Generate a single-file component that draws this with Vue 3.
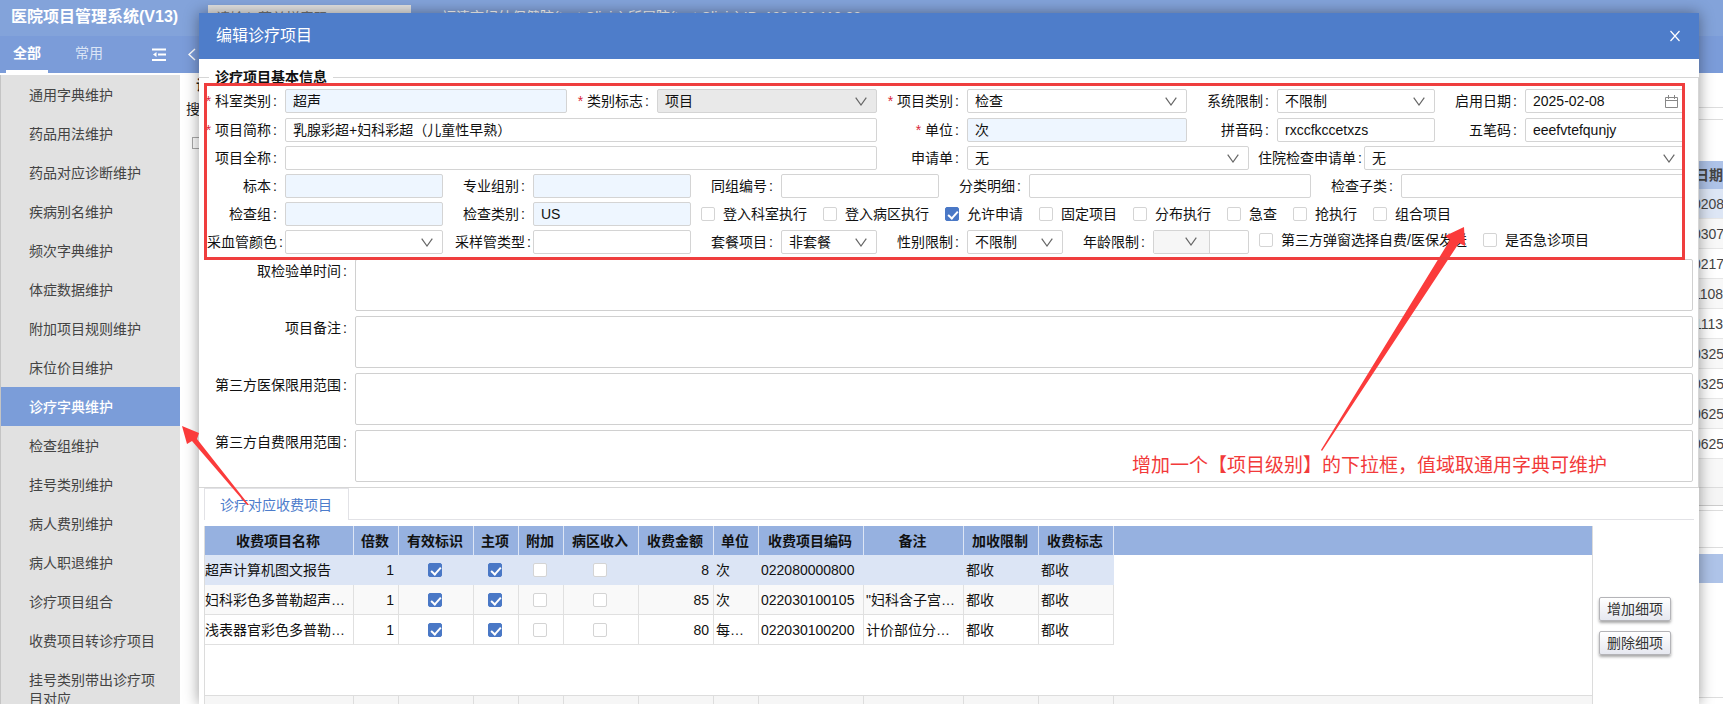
<script setup>
import { ref } from 'vue'

const menu = [
  '通用字典维护', '药品用法维护', '药品对应诊断维护', '疾病别名维护', '频次字典维护',
  '体症数据维护', '附加项目规则维护', '床位价目维护', '诊疗字典维护', '检查组维护',
  '挂号类别维护', '病人费别维护', '病人职退维护', '诊疗项目组合', '收费项目转诊疗项目',
  '挂号类别带出诊疗项目对应',
]
const activeMenu = ref('诊疗字典维护')

const rows = [
  {
    id: 'r1',
    fields: [
      { id: 'dept', label: '科室类别', req: true, type: 'text', value: '超声', tint: true },
      { id: 'flag', label: '类别标志', req: true, type: 'select', value: '项目', disabled: true },
      { id: 'kind', label: '项目类别', req: true, type: 'select', value: '检查' },
      { id: 'sys', label: '系统限制', type: 'select', value: '不限制' },
      { id: 'date', label: '启用日期', type: 'date', value: '2025-02-08' },
    ],
  },
  {
    id: 'r2',
    fields: [
      { id: 'short', label: '项目简称', req: true, type: 'text', value: '乳腺彩超+妇科彩超（儿童性早熟）' },
      { id: 'unit', label: '单位', req: true, type: 'text', value: '次', tint: true },
      { id: 'py', label: '拼音码', type: 'text', value: 'rxccfkccetxzs' },
      { id: 'wb', label: '五笔码', type: 'text', value: 'eeefvtefqunjy' },
    ],
  },
  {
    id: 'r3',
    fields: [
      { id: 'full', label: '项目全称', type: 'text', value: '' },
      { id: 'apply', label: '申请单', type: 'select', value: '无' },
      { id: 'inapply', label: '住院检查申请单', type: 'select', value: '无', tight: true },
    ],
  },
  {
    id: 'r4',
    fields: [
      { id: 'sample', label: '标本', type: 'text', value: '', tint: true },
      { id: 'major', label: '专业组别', type: 'text', value: '', tint: true },
      { id: 'group', label: '同组编号', type: 'text', value: '' },
      { id: 'detail', label: '分类明细', type: 'text', value: '' },
      { id: 'sub', label: '检查子类', type: 'text', value: '' },
    ],
  },
  {
    id: 'r5',
    fields: [
      { id: 'cgroup', label: '检查组', type: 'text', value: '', tint: true },
      { id: 'ctype', label: '检查类别', type: 'text', value: 'US', tint: true },
    ],
    checks: [
      ['登入科室执行', false], ['登入病区执行', false], ['允许申请', true], ['固定项目', false],
      ['分布执行', false], ['急查', false], ['抢执行', false], ['组合项目', false],
    ],
  },
  {
    id: 'r6',
    fields: [
      { id: 'color', label: '采血管颜色', type: 'select', value: '', tight: true },
      { id: 'tube', label: '采样管类型', type: 'text', value: '', tight: true },
      { id: 'pack', label: '套餐项目', type: 'select', value: '非套餐' },
      { id: 'sex', label: '性别限制', type: 'select', value: '不限制' },
      { id: 'age', label: '年龄限制', type: 'age', value: '' },
    ],
    checks: [['第三方弹窗选择自费/医保发送', false], ['是否急诊项目', false]],
  },
]

const notes = [
  { id: 'n1', label: '取检验单时间' },
  { id: 'n2', label: '项目备注' },
  { id: 'n3', label: '第三方医保限用范围' },
  { id: 'n4', label: '第三方自费限用范围' },
]

const heads = ['收费项目名称', '倍数', '有效标识', '主项', '附加', '病区收入', '收费金额', '单位', '收费项目编码', '备注', '加收限制', '收费标志']
const items = [
  { name: '超声计算机图文报告', n: 1, c: [true, true, false, false], fee: 8, unit: '次', code: '022080000800', memo: '' },
  { name: '妇科彩色多普勒超声…', n: 1, c: [true, true, false, false], fee: 85, unit: '次', code: '022030100105', memo: '"妇科含子宫…' },
  { name: '浅表器官彩色多普勒…', n: 1, c: [true, true, false, false], fee: 80, unit: '每…', code: '022030100200', memo: '计价部位分…' },
]
const backDates = ['0208', '0307', '0217', '1108', '1113', '0325', '0325', '0625', '0625']
</script>

<template>
  <div class="page">
    <header class="top">
      <h1>医院项目管理系统(V13)</h1>
      <input class="search" type="text" placeholder="请输入菜单拼音码" aria-label="菜单搜索">
      <span class="who">福清市妇幼保健院(test.Clinic) 所属院(test.Clinic) IP: 192.168.113.22</span>
    </header>
    <div class="bar">
      <button class="on">全部</button>
      <button>常用</button>
      <svg class="fold" width="14" height="14" viewBox="0 0 14 14" fill="none" stroke="#fff" stroke-width="2">
        <path d="M0 1.5H14M6 6.5H14M0 12H14" /><path d="M4.5 4L1 6.5L4.5 9Z" fill="#fff" stroke="none" />
      </svg>
      <svg class="back" width="8" height="13" viewBox="0 0 8 13" fill="none" stroke="#fff" stroke-width="1.5"><path d="M7 1L1 6.5L7 12" /></svg>
    </div>
    <div class="base">
      <nav>
        <a v-for="m in menu" :key="m" href="#" :class="{ active: m === activeMenu }" @click.prevent="activeMenu = m">{{ m }}</a>
      </nav>
      <div class="under">
        <div class="under-left">
          <b>诊</b>
          <span>搜</span>
          <i></i>
        </div>
        <div class="under-right">
          <div class="u-line one"></div>
          <div class="u-line two"></div>
          <div class="u-head">日期</div>
          <div v-for="(d, i) in backDates" :key="i" class="u-row">{{ d }}</div>
          <div class="u-foot"></div>
          <div class="u-gray"></div>
          <div class="u-gap"></div>
          <div class="u-band"></div>
          <div class="u-end"></div>
        </div>
      </div>
    </div>

    <section class="modal" role="dialog" aria-labelledby="dlg">
      <div class="mhead">
        <h2 id="dlg">编辑诊疗项目</h2>
        <button aria-label="关闭">
          <svg width="10" height="12" viewBox="0 0 10 12" stroke="#fff" stroke-width="1.2"><path d="M.5 1L9.5 11M9.5 1L.5 11" /></svg>
        </button>
      </div>

      <fieldset>
        <legend>诊疗项目基本信息</legend>
        <div class="form">
          <div v-for="r in rows" :key="r.id" class="row" :class="r.id">
            <template v-for="f in r.fields" :key="f.id">
              <label :for="f.id" :class="{ tight: f.tight }"><em v-if="f.req">*</em>{{ f.label }}<s>:</s></label>
              <div class="ctl" :class="{ tint: f.tint, off: f.disabled }">
                <template v-if="f.type === 'select'">
                  <select :id="f.id" :disabled="f.disabled"><option>{{ f.value }}</option></select>
                  <svg class="chev" width="12" height="9" viewBox="0 0 12 9"><path d="M.7 .7L6 8L11.3 .7" /></svg>
                </template>
                <template v-else-if="f.type === 'age'">
                  <span class="agesel">
                    <select :id="f.id"><option></option></select>
                    <svg class="chev" width="12" height="9" viewBox="0 0 12 9"><path d="M.7 .7L6 8L11.3 .7" /></svg>
                  </span>
                  <input type="text" aria-label="年龄">
                </template>
                <template v-else>
                  <input :id="f.id" type="text" :value="f.value">
                  <svg v-if="f.type === 'date'" class="cal" width="13" height="13" viewBox="0 0 13 13"><path d="M.5 2.5H12.5V12.5H.5ZM.5 5.5H12.5M3.5 0V4M9.5 0V4" /></svg>
                </template>
              </div>
            </template>
            <div v-if="r.checks" class="checks">
              <label v-for="c in r.checks" :key="c[0]"><input type="checkbox" :checked="c[1]"><span>{{ c[0] }}</span></label>
            </div>
          </div>
          <div class="frame"></div>
        </div>
        <div class="notes">
          <template v-for="n in notes" :key="n.id">
            <label :for="n.id">{{ n.label }}<s>:</s></label>
            <textarea :id="n.id"></textarea>
          </template>
        </div>
      </fieldset>

      <div class="tabs"><button>诊疗对应收费项目</button></div>

      <div class="lower">
        <div class="grid">
          <table>
            <colgroup><col v-for="(h, i) in heads" :key="h" :class="'k' + i"><col></colgroup>
            <thead><tr><th v-for="h in heads" :key="h">{{ h }}</th><th class="fill"></th></tr></thead>
            <tbody>
              <tr v-for="it in items" :key="it.code">
                <td>{{ it.name }}</td>
                <td class="num">{{ it.n }}</td>
                <td v-for="(c, i) in it.c" :key="i" class="mid"><input type="checkbox" :checked="c" :aria-label="heads[i + 2]"></td>
                <td class="num">{{ it.fee }}</td>
                <td>{{ it.unit }}</td>
                <td>{{ it.code }}</td>
                <td>{{ it.memo }}</td>
                <td>都收</td>
                <td>都收</td>
                <td class="fill"></td>
              </tr>
            </tbody>
          </table>
          <table class="sum">
            <colgroup><col v-for="(h, i) in heads" :key="h" :class="'k' + i"><col></colgroup>
            <tbody><tr><td>合计:</td><td v-for="i in 11" :key="i"></td><td class="fill"></td></tr></tbody>
          </table>
        </div>
        <div class="acts">
          <button>增加细项</button>
          <button>删除细项</button>
        </div>
      </div>
    </section>

    <svg class="arrows" width="1500" height="520" viewBox="0 0 1500 520" fill="#fb3b3b">
      <path d="M182 426L199 433L197 439L249 505L247 505L192 441L187 444Z" />
      <path d="M1464 227L1465 246L1459 243L1322 451L1321 450L1450 240L1445 236Z" />
    </svg>
    <p class="remark">增加一个【项目级别】的下拉框，值域取通用字典可维护</p>
  </div>
</template>

<style>
body { margin: 0; overflow: hidden; }
</style>

<style scoped>
* { box-sizing: border-box; }
.page {
  position: relative; height: 100vh; overflow: hidden; background: #fff; color: #222;
  display: flex; flex-direction: column;
  font: 14px/20px "Liberation Sans", "Noto Sans CJK SC", sans-serif;
}
button, input, select, textarea { font: inherit; color: inherit; margin: 0; padding: 0; border: 0; background: none; border-radius: 0; outline: 0; }
h1, h2, p { margin: 0; font-weight: normal; }
s, em, i { text-decoration: none; font-style: normal; }

.top { flex: none; height: 36px; background: #83a3da; display: flex; align-items: flex-start; color: #fff; }
.top h1 { width: 197px; padding: 6px 0 0 11px; font-size: 16px; line-height: 22px; font-weight: bold; white-space: nowrap; }
.search { width: 203px; height: 26px; margin: 5px 31px 0 11px; padding: 0 8px; background: #e2e2e2; }
.who { padding-top: 7px; white-space: nowrap; }
.bar { flex: none; height: 37px; background: #7b9cd9; display: flex; align-items: center; }
.bar button { width: 42px; height: 37px; margin-left: 20px; color: #dbe5f6; border-bottom: 3px solid transparent; }
.bar .on { margin-left: 6px; color: #fff; font-weight: bold; border-color: #fff; }
.fold { margin-left: 42px; }
.back { margin-left: 22px; }

.base { flex: 1; min-height: 0; display: flex; }
nav { width: 180px; flex: none; margin-top: 2px; background: #e1e1e1; border-left: 1px solid #c4c4c4; overflow: hidden; }
nav a { display: block; padding: 11px 24px 9px 28px; line-height: 19px; color: #444; text-decoration: none; }
nav a.active { background: #7b9dd9; color: #fff; font-weight: 500; }
.under { flex: 1; display: flex; justify-content: space-between; }
.under-left { width: 24px; display: flex; flex-direction: column; align-items: flex-start; padding: 2px 0 0 6px; }
.under-left b { margin-left: 10px; }
.under-left span { margin-top: 4px; }
.under-left i { width: 12px; height: 12px; margin: 18px 0 0 6px; border: 1px solid #aaa; }
.under-right { width: 30px; padding-top: 34px; text-align: right; color: #444; }
.u-line { height: 12px; border-top: 1px solid #ddd; }
.u-line.two { height: 42px; }
.u-head { height: 28px; line-height: 28px; background: #aec3e8; font-weight: bold; }
.u-row { height: 30px; line-height: 30px; border-bottom: 1px solid #e6e6e6; }
.u-row:nth-child(4) { background: #dde6f5; }
.u-row:nth-child(odd) { background: #f8f8f8; }
.u-foot { height: 29px; background: #f8f8f8; border-bottom: 1px solid #ddd; }
.u-gray { height: 18px; background: #f5f5f5; border-bottom: 1px solid #ccc; }
.u-gap { height: 38px; margin-top: 4px; border: solid #ddd; border-width: 1px 0; }
.u-band { height: 29px; margin-top: 6px; background: #aec3e8; }
.u-end { height: 115px; border-bottom: 1px solid #ddd; }

.modal {
  position: absolute; left: 199px; right: 24px; top: 13px; bottom: 0;
  background: #fff; color: #111; box-shadow: 0 0 14px rgba(0, 0, 0, .4);
}
.mhead { height: 46px; background: #4e7dca; color: #fff; display: flex; align-items: center; justify-content: space-between; padding: 0 19px 0 17px; }
.mhead h2 { font-size: 16px; line-height: 24px; }
.mhead button { width: 10px; height: 12px; line-height: 0; }

fieldset { margin: 8px 0 0; padding: 0; min-width: 0; border: solid #d6d6d6; border-width: 1px 1px 1px 0; }
legend { margin-left: 10px; padding: 0 6px; font-weight: bold; line-height: 20px; }
.form { position: relative; margin: 2px 13px 0 5px; padding: 0 0 5px 3px; display: grid; row-gap: 4px; }
.frame { position: absolute; inset: -6px 0 -1px 0; border: 3px solid #ef3e3e; pointer-events: none; z-index: 2; }
.row { display: grid; height: 24px; }
.r1 { grid-template-columns: 78px 282fr 90px 220fr 90px 220fr 90px 158fr 90px 160fr; margin-bottom: 1px; }
.r2 { grid-template-columns: 78px 592fr 90px 220fr 90px 158fr 90px 160fr; }
.r3 { grid-template-columns: 78px 592fr 90px 282fr 115px 321fr; }
.r4 { grid-template-columns: 78px 158fr 90px 158fr 90px 158fr 90px 282fr 90px 284fr; }
.r5 { grid-template-columns: 78px 158fr 90px 158fr 994fr; }
.r6 { grid-template-columns: 78px 158fr 90px 158fr 90px 96fr 90px 96fr 90px 96fr 436fr; }
.row > label { display: flex; justify-content: flex-end; line-height: 24px; white-space: nowrap; min-width: 0; }
.row s, .notes s { margin: 0 8px 0 2px; }
.row .tight s { margin-right: 2px; }
em { margin-right: 4px; color: #d9263c; }
.ctl { position: relative; display: flex; height: 24px; min-width: 0; border: 1px solid #d4d4d4; border-radius: 2px; background: #fff; }
.ctl input, .ctl select { appearance: none; flex: 1; width: 100%; min-width: 0; padding: 0 7px; line-height: 22px; }
.ctl select { opacity: 1; color: #111; }
.ctl.tint { background: #eef6ff; }
.ctl.off { background: #e9e9e9; }
.chev { position: absolute; right: 9px; top: 7px; fill: none; stroke: #666; stroke-width: 1.2; pointer-events: none; }
.cal { position: absolute; right: 6px; top: 5px; fill: none; stroke: #888; }
.agesel { position: relative; flex: 0 0 56px; display: flex; background: #f6f6f6; border-right: 1px solid #d4d4d4; }
.agesel .chev { right: 12px; top: 6px; }
.checks { display: flex; align-items: center; gap: 16px; padding-left: 10px; min-width: 0; white-space: nowrap; }
.r6 .checks { height: 20px; }
.checks label { display: flex; align-items: center; gap: 8px; }
input[type=checkbox] {
  appearance: none; flex: none; position: relative; display: block; width: 14px; height: 14px;
  border: 1px solid #d4d4d4; border-radius: 2px; background: #fff;
}
input[type=checkbox]:checked { background: #4a78c6; border-color: #4a78c6; }
input[type=checkbox]:checked::after {
  content: ""; position: absolute; left: 4px; top: 1px; width: 4px; height: 8px;
  border: solid #fff; border-width: 0 2px 2px 0; transform: rotate(42deg);
}

.notes { display: grid; grid-template-columns: 156px 1fr; row-gap: 5px; padding: 0 5px 5px 0; }
.notes label { text-align: right; line-height: 24px; white-space: nowrap; }
.notes textarea { display: block; width: 100%; height: 52px; resize: none; border: 1px solid #d0d0d0; border-radius: 2px; padding: 4px 8px; }

.tabs { display: flex; margin: 0 5px; height: 32px; }
.tabs button { flex: none; padding: 0 16px 0 15px; color: #4d7ccb; border: 1px solid #e2e2e6; border-bottom: 0; }
.tabs::after { content: ""; flex: 1; border-bottom: 1px solid #e2e2e6; }

.lower { display: flex; margin: 6px 28px 0 5px; gap: 6px; }
.grid { flex: 1; min-width: 0; border: solid #dcdcdc; border-width: 0 1px; display: flex; flex-direction: column; justify-content: space-between; height: 199px; }
table { width: 100%; table-layout: fixed; border-collapse: separate; border-spacing: 0; }
.k0 { width: 149px; }
.k1, .k3, .k4, .k7 { width: 45px; }
.k2, .k5, .k6, .k10, .k11 { width: 75px; }
.k8 { width: 105px; }
.k9 { width: 100px; }
th { height: 29px; padding: 0 2px 0 0; background: #96b1e0; border-right: 1px solid #dce5f5; font-weight: bold; white-space: nowrap; }
td { height: 30px; padding: 0 2px; border: solid #e0e0e0; border-width: 0 1px 1px 0; white-space: nowrap; overflow: hidden; text-overflow: ellipsis; }
td:first-child { padding-left: 0; }
tbody tr:nth-child(1) td { background: #dce5f5; border-color: #dce5f5; }
tbody tr:nth-child(2) td { background: #f9f9f9; }
td.num { text-align: right; padding-right: 4px; }
td.mid { padding: 0 2px 0 0; }
td.mid input { margin: 0 auto; }
th.fill { border: 0; }
tbody tr td.fill { background: #fff; border: 0; }
.sum tbody tr td { background: #f6f6f6; border-color: #ddd; border-width: 1px 1px 0 0; }
.sum tbody tr td.fill { background: #f6f6f6; border-top: 1px solid #ddd; }
.sum td:first-child { padding-left: 4px; }
.acts { flex: none; width: 72px; padding-top: 71px; display: flex; flex-direction: column; gap: 10px; }
.acts button { height: 24px; color: #333; border: 1px solid #b4b4b8; border-radius: 2px; background: linear-gradient(#fff, #e6e8f0); box-shadow: 0 2px 3px rgba(0, 0, 0, .35); }

.arrows { position: absolute; left: 0; top: 0; pointer-events: none; }
.remark { position: absolute; left: 1132px; top: 453px; font-size: 19px; line-height: 26px; color: #f23a3a; white-space: nowrap; }
</style>
